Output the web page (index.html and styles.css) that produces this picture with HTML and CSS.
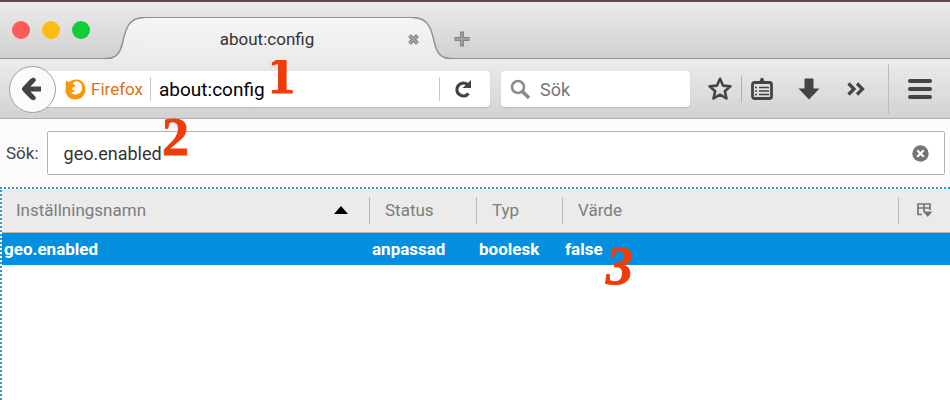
FILE: index.html
```html
<!DOCTYPE html>
<html lang="sv">
<head>
<meta charset="utf-8">
<title>about:config</title>
<link rel="stylesheet" href="styles.css">
</head>
<body>
<div class="browser">
  <header class="tabbar">
    <div class="lights">
      <button class="light red" aria-label="Stäng fönster"></button>
      <button class="light yellow" aria-label="Minimera"></button>
      <button class="light green" aria-label="Zooma"></button>
    </div>
    <div class="tab">
      <svg class="tab-edge" viewBox="0 0 40 43" aria-hidden="true">
        <defs><linearGradient id="tab-shade" x1="0" y1="0" x2="0" y2="1"><stop stop-color="#f6f6f6"/><stop offset="1" stop-color="#ebebeb"/></linearGradient></defs>
        <path fill="url(#tab-shade)" d="M0 42.500C12 42.500 15 36 17.500 26C21 9 25 .5 40 .5V43H0Z"/>
        <path class="tab-line" d="M0 41.500C12 41.500 15 36 17.500 26C21 9 25 .5 40 .5"/>
      </svg>
      <div class="tab-body">
        <span class="tab-title">about:config</span>
        <button class="tab-close" aria-label="Stäng flik">
          <svg width="13" height="13" viewBox="0 0 13 13"><path d="M2.500 2.500L10.500 10.500M10.500 2.500L2.500 10.500" stroke="#8b8b8b" stroke-width="4"/><path d="M2.500 2.500L10.500 10.500M10.500 2.500L2.500 10.500" stroke="#bcbcbc" stroke-width="1"/></svg>
        </button>
      </div>
      <svg class="tab-edge flip" viewBox="0 0 40 43" aria-hidden="true">
        <path fill="url(#tab-shade)" d="M0 42.500C12 42.500 15 36 17.500 26C21 9 25 .5 40 .5V43H0Z"/>
        <path class="tab-line" d="M0 41.500C12 41.500 15 36 17.500 26C21 9 25 .5 40 .5"/>
      </svg>
    </div>
    <button class="new-tab" aria-label="Ny flik">
      <svg width="18" height="18" viewBox="0 0 18 18"><path d="M9 1.500V16.500M1.500 9H16.500" stroke="#858585" stroke-width="4"/><path d="M9 2.500V15.500M2.500 9H15.500" stroke="#a6a6a6" stroke-width="1.500"/></svg>
    </button>
  </header>

  <nav class="toolbar">
    <button class="back" aria-label="Tillbaka">
      <svg width="24" height="26" viewBox="0 0 24 26"><path d="M12 4L3.500 13L12 22M5 13H20" fill="none" stroke="#444" stroke-width="5" stroke-linejoin="round"/><path d="M12.500 4L3.500 13L12.500 22" fill="none" stroke="#444" stroke-width="4.500" stroke-linecap="round" stroke-linejoin="round"/></svg>
    </button>
    <div class="urlbar">
      <svg class="fox" width="21" height="21" viewBox="0 0 21 21"><path d="M1 1.500L4 3Q7 0 12 .5C17.500 1 20.500 5.500 20.500 10.500C20.500 16.500 16 20.500 10.500 20.500C4.500 20.500.5 16.500.5 10.500C.5 7 1 4 1 1.500Z" fill="#f39813"/><path d="M8 4Q10 1.500 13 2.500C17 4 18 8 16.500 12Q14 16 9.500 15.500Q7 15 6 13Q8.500 13.500 10.500 12Q9.500 11 7 11L7.500 8.500L11 7Q8.500 6 8 4Z" fill="#fffaf0"/></svg>
      <span class="identity">Firefox</span>
      <input class="url-input" type="text" aria-label="Adress" value="about:config">
      <button class="reload" aria-label="Ladda om">
        <svg width="20" height="20" viewBox="0 0 20 20"><path d="M14.500 5.500A6.500 6.500 0 1 0 15.500 14.500" fill="none" stroke="#444" stroke-width="3.200"/><path d="M18 1V9H9.500Z" fill="#444"/></svg>
      </button>
    </div>
    <div class="searchbar">
      <svg width="21" height="21" viewBox="0 0 21 21" aria-hidden="true"><circle cx="8" cy="8" r="6" fill="none" stroke="#8b8b8b" stroke-width="2.600"/><path d="M12.500 12.500L19 19" stroke="#8b8b8b" stroke-width="3.500"/></svg>
      <input class="search-input" type="text" aria-label="Sök på webben" placeholder="Sök">
    </div>
    <div class="actions">
      <button class="tool" aria-label="Bokmärk">
        <svg width="26" height="26" viewBox="0 0 26 26"><path d="M13 2.800L16 9.600L23.400 10.300L17.800 15.200L19.500 22.500L13 18.700L6.500 22.500L8.200 15.200L2.600 10.300L10 9.600Z" fill="none" stroke="#444" stroke-width="2.600" stroke-linejoin="round"/></svg>
      </button>
      <span class="rule"></span>
      <button class="tool" aria-label="Visa bokmärken">
        <svg width="22" height="24" viewBox="0 0 22 24"><rect x="1.500" y="5.500" width="19" height="16" rx="2" fill="none" stroke="#444" stroke-width="2.800"/><path d="M5 6L9 3.500L9.500 1.500Q11 0 12.500 1.500L13 3.500L17 6V7H5Z" fill="#444"/><path d="M4 10.500H6M8 10.500H18M4 14H6M8 14H18M4 17.500H6M8 17.500H18" stroke="#444" stroke-width="1.700"/></svg>
      </button>
      <button class="tool" aria-label="Hämtningar">
        <svg width="22" height="22" viewBox="0 0 22 22"><path d="M7.500.5H14.500Q15.500.5 15.500 1.500V10.500H21.500L11 21.500L.5 10.500H6.500V1.500Q6.500.5 7.500.5Z" fill="#444"/></svg>
      </button>
      <button class="tool" aria-label="Fler verktyg">
        <svg width="20" height="16" viewBox="0 0 20 16"><path d="M2.500 2.500L8 8L2.500 13.500M11 2.500L16.500 8L11 13.500" fill="none" stroke="#444" stroke-width="3.200"/></svg>
      </button>
    </div>
    <span class="rule tall"></span>
    <button class="menu" aria-label="Öppna meny">
      <svg width="24" height="20" viewBox="0 0 24 20"><path d="M2 2H22M2 10H22M2 18H22" stroke="#444" stroke-width="4" stroke-linecap="round"/></svg>
    </button>
  </nav>

  <main class="config">
    <div class="filter">
      <label for="filter">Sök:</label>
      <div class="filter-box">
        <input id="filter" type="text" value="geo.enabled">
        <button class="clear" aria-label="Rensa">
          <svg width="17" height="17" viewBox="0 0 17 17"><circle cx="8.500" cy="8.500" r="8.200" fill="#757575"/><path d="M5.300 5.300L11.700 11.700M11.700 5.300L5.300 11.700" stroke="#fff" stroke-width="2.200"/></svg>
        </button>
      </div>
    </div>
    <div class="tree">
      <table>
        <colgroup><col class="c-name"><col class="c-status"><col class="c-type"><col><col class="c-pick"></colgroup>
        <thead>
          <tr>
            <th scope="col" aria-sort="ascending"><div class="sorted">Inställningsnamn<svg width="14" height="8" viewBox="0 0 14 8" aria-hidden="true"><path d="M0 8L7 0L14 8Z"/></svg></div></th>
            <th scope="col">Status</th>
            <th scope="col">Typ</th>
            <th scope="col">Värde</th>
            <th class="picker"><button aria-label="Välj kolumner"><svg width="17" height="16" viewBox="0 0 17 16"><path d="M6 12.500H2V2H14V8M2 6H14M8 2V10" fill="none" stroke="#757575" stroke-width="1.700"/><path d="M7 9.500H16.500L11.800 15Z" fill="#757575"/></svg></button></th>
          </tr>
        </thead>
        <tbody>
          <tr><td>geo.enabled</td><td>anpassad</td><td>boolesk</td><td colspan="2">false</td></tr>
        </tbody>
      </table>
    </div>
  </main>
  <span class="step one">1</span>
  <span class="step two">2</span>
  <span class="step three">3</span>
</div>
</body>
</html>
```
FILE: styles.css
```css
* { box-sizing: border-box; }
body {
  margin: 0;
  background: #fff;
  color: #333;
  font-family: Roboto, "Liberation Sans", sans-serif;
  font-size: 17px;
  line-height: 20px;
}
button, input { font: inherit; color: inherit; border: 0; padding: 0; margin: 0; background: none; }
input { min-width: 0; outline: 0; }
button { display: flex; align-items: center; justify-content: center; }
svg { display: block; flex: none; }

.browser { position: relative; min-height: 100vh; display: flex; flex-direction: column; }

.tabbar {
  display: flex;
  align-items: flex-end;
  height: 60px;
  border-top: 2px solid #6b444c;
  background: linear-gradient(#ebebeb, #d0d0d0 56px, #929292 56px, #929292 57px, #ebebeb 57px);
}
.lights { display: flex; gap: 12px; padding: 0 0 21px 12px; width: 105px; flex: none; }
.light { width: 18px; height: 18px; border-radius: 50%; }
.red { background: #fc5b57; }
.yellow { background: #fdbc12; }
.green { background: #14cc37; }
.tab { display: flex; flex: 0 1 347px; height: 43px; }
.tab-edge { width: 40px; height: 43px; }
.flip { transform: scaleX(-1); }
.tab-line { fill: none; stroke: #929292; stroke-width: 1.5; }
.tab-body {
  position: relative;
  z-index: 1;
  flex: 1;
  display: flex;
  align-items: center;
  border-top: 1px solid #929292;
  background: linear-gradient(#f6f6f6, #ebebeb);
}
.tab-title { flex: 1; padding: 0 18px 0 0; text-align: center; }
.tab-close { margin-right: -8px; }
.new-tab { margin: 0 0 12px 1px; }

.toolbar {
  display: flex;
  align-items: center;
  height: 59px;
  padding: 0 18px 0 9px;
  background: linear-gradient(#ebebeb, #d2d2d2);
  border-bottom: 1px solid #b0b0b0;
}
.back {
  width: 47px;
  height: 47px;
  flex: none;
  border: 1px solid #a0a0a0;
  border-radius: 50%;
  background: #fbfbfb;
  z-index: 1;
}
.urlbar, .searchbar {
  display: flex;
  align-items: center;
  height: 36px;
  background: #fff;
  border-radius: 4px;
  box-shadow: 0 1px 1px #bbb;
}
.urlbar { flex: 449 1 0; min-width: 0; margin-left: -16px; padding-left: 25px; }
.identity { color: #d9731a; padding: 0 7px 0 5px; border-right: 1px solid #c8c8c8; line-height: 24px; }
.url-input { flex: 1; padding-left: 8px; font-size: 19px; height: 30px; color: #000; }
.reload { width: 51px; height: 24px; padding-right: 4px; border-left: 1px solid #c8c8c8; }
.searchbar { flex: 190 1 0; min-width: 0; margin-left: 11px; padding-left: 9px; gap: 9px; }
.search-input { flex: 1; width: 0; font-size: 18px; height: 30px; }
.search-input::placeholder { color: #777; opacity: 1; }
.actions { display: flex; align-items: center; padding: 0 22px 0 17px; }
.tool:nth-of-type(2) { margin: 0 25px 0 9px; }
.tool:nth-of-type(4) { margin-left: 26px; }
.rule { width: 1px; height: 26px; margin-left: 8px; background: #b0b0b0; }
.rule.tall { height: 50px; margin: 0 19px 0 0; background: #bcbcbc; }

.config { flex: 1; display: flex; flex-direction: column; background: #fbfbfb; }
.filter { display: flex; align-items: center; gap: 8px; padding: 12px 5px 12px 6px; }
.filter label { color: #3b4452; }
.filter-box {
  flex: 1;
  display: flex;
  align-items: center;
  height: 44px;
  padding: 0 15px 0 16px;
  border: 1px solid #b3b3b3;
  border-radius: 2px;
  background: #fff;
}
.filter-box input { flex: 1; height: 30px; font-size: 18px; }

.tree { flex: 1; background: #fff; border: 2px dotted #3098cb; border-right: 0; border-bottom: 0; }
table { width: 100%; table-layout: fixed; border-collapse: collapse; }
.c-name { width: 368px; }
.c-status { width: 107px; }
.c-type { width: 86px; }
.c-pick { width: 51px; }
th {
  height: 43px;
  padding: 0 15px;
  text-align: left;
  font-weight: 400;
  color: #7d7d7d;
  background: linear-gradient(#b8b8b8, #b8b8b8) right 0 center / 1px 27px no-repeat, #ebebeb;
  border-bottom: 1px solid #b5b5b5;
}
th:first-child { padding: 0 22px 0 14px; }
.picker { padding: 0; background: #ebebeb; }
.sorted { display: flex; align-items: center; justify-content: space-between; }
.picker button { width: 100%; }
td { height: 33px; padding: 0 2px; font-weight: 700; color: #fff; background: #0490e0; }

.step {
  position: absolute;
  color: #ee3d0a;
  font: 700 54px/54px "Liberation Serif", serif;
  -webkit-text-stroke: 1px #ee3d0a;
}
.one { left: 268px; top: 48px; }
.two { left: 162px; top: 110px; }
.three { left: 606px; top: 239px; font-style: italic; }
```
